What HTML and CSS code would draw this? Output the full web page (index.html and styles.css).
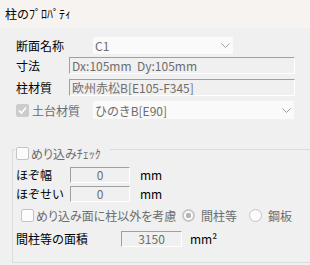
FILE: index.html
```html
<!DOCTYPE html>
<html lang="ja">
<head>
  <meta charset="UTF-8">
  <title>柱のプロパティ</title>
  <link rel="stylesheet" href="styles.css">
</head>
<body>
  <div class="title">柱のﾌﾟﾛﾊﾟﾃｨ</div>

  <div class="panel">
    <div class="row row-name">
      <span class="label">断面名称</span>
      <div class="combo combo-name">
        <span>C1</span>
        <svg class="chevron" width="9" height="5" viewBox="0 0 9 5"><polyline points="0.5,0.5 4.5,4.5 8.5,0.5"/></svg>
      </div>
    </div>
    <div class="row row-size">
      <span class="label">寸法</span>
      <div class="field field-long">Dx:105mm&nbsp;&nbsp;Dy:105mm</div>
    </div>
    <div class="row row-mat">
      <span class="label">柱材質</span>
      <div class="field field-long">欧州赤松B[E105-F345]</div>
    </div>
    <div class="row row-base">
      <span class="label label-check disabled">
        <span class="check checked">
          <svg width="13" height="13" viewBox="0 0 13 13"><polyline points="3,6.5 5.5,9 10,3.5"/></svg>
        </span>
        土台材質
      </span>
      <div class="combo combo-base">
        <span>ひのきB[E90]</span>
        <svg class="chevron" width="9" height="5" viewBox="0 0 9 5"><polyline points="0.5,0.5 4.5,4.5 8.5,0.5"/></svg>
      </div>
    </div>

    <div class="group">
      <div class="legend disabled">
        <span class="check"></span>
        <span class="kana">めり込みﾁｪｯｸ</span>
      </div>
      <div class="row row-tenon">
        <span class="label label-tenon">ほぞ幅</span>
        <div class="field field-num">0</div>
        <span class="unit">mm</span>
      </div>
      <div class="row row-tenon2">
        <span class="label label-tenon">ほぞせい</span>
        <div class="field field-num">0</div>
        <span class="unit">mm</span>
      </div>
      <div class="row row-opts disabled">
        <span class="check check-opt"></span>
        <span class="opt-text kana">めり込み面に柱以外を考慮</span>
        <span class="radio checked"></span>
        <span class="radio-text">間柱等</span>
        <span class="radio"></span>
        <span class="radio-text">鋼板</span>
      </div>
      <div class="row row-area">
        <span class="label label-area">間柱等の面積</span>
        <div class="field field-area">3150</div>
        <span class="unit unit-area">mm²</span>
      </div>
    </div>
  </div>
</body>
</html>
```

FILE: styles.css
```css
html, body {
  margin: 0;
  overflow: hidden;
}
body {
  width: 310px;
  height: 265px;
  background: #f0f0f0;
  font-family: "Noto Sans CJK JP", "Noto Sans", sans-serif;
  font-size: 12px;
  color: #000;
}
.title {
  height: 28px;
  line-height: 28px;
  padding-left: 5px;
  background: #f7f3f0;
}
.panel {
  padding: 9px 0 0 16px;
}
.row {
  display: flex;
  align-items: center;
}
.label {
  width: 53px;
  flex: none;
  white-space: nowrap;
}
.disabled {
  color: #6d6d6d;
}

/* combo boxes */
.combo {
  box-sizing: border-box;
  display: flex;
  align-items: center;
  justify-content: space-between;
  height: 17px;
  margin-left: 24px;
  padding: 0 3px 0 2px;
  background: #fafafa;
  color: #6d6d6d;
}
.combo-name {
  width: 140px;
}
.combo-base {
  width: 201px;
  height: 18px;
}
.chevron polyline {
  fill: none;
  stroke: #a0a0a0;
  stroke-width: 1;
}

/* sunken text fields */
.field {
  box-sizing: border-box;
  height: 17px;
  line-height: 15px;
  padding-left: 2px;
  border: 1px solid;
  border-color: #a0a0a0 #fff #fff #a0a0a0;
  color: #6d6d6d;
  white-space: nowrap;
}
.field-long {
  width: 226px;
}
.row-size { margin-top: 3px; }
.row-mat { margin-top: 5px; }
.row-base { margin-top: 5px; }

.label-check {
  display: flex;
  align-items: center;
  width: 77px;
}
.row-base .combo {
  margin-left: 0;
}

/* checkbox / radio */
.check {
  box-sizing: border-box;
  display: inline-block;
  width: 13px;
  height: 13px;
  flex: none;
  margin-right: 3px;
  border: 1px solid #c4c4c4;
  border-radius: 2px;
  background: #fcfcfc;
}
.check.checked {
  border-color: #cccccc;
  background: #cccccc;
}
.check svg {
  display: block;
  margin: -1px;
}
.check polyline {
  fill: none;
  stroke: #fff;
  stroke-width: 1.6;
}
.radio {
  box-sizing: border-box;
  width: 13px;
  height: 13px;
  flex: none;
  border: 1px solid #c4c4c4;
  border-radius: 50%;
  background: #fcfcfc;
}
.radio.checked {
  border: 2px solid #c8c8c8;
  background: radial-gradient(circle, #b4b4b4 0 2.6px, #fcfcfc 3px);
}
.radio-text {
  margin-left: 6px;
  width: 48px;
}

/* group box */
.group {
  width: 303px;
  margin: 30px 0 0 -4px;
  padding: 0 0 15px 3px;
  border: 1px solid #dcdcdc;
}
.legend {
  box-sizing: border-box;
  display: flex;
  align-items: center;
  width: 95px;
  height: 14px;
  margin: -4px 0 0 -1px;
  padding-left: 1px;
  background: #f0f0f0;
  white-space: nowrap;
  overflow: hidden;
}
.legend .check {
  margin-right: 2px;
}
.kana {
  font-feature-settings: "palt";
}
.field-num {
  width: 60px;
  height: 16px;
  line-height: 14px;
  text-align: center;
  padding: 0;
}
.label-tenon {
  width: 54px;
}
.unit {
  margin-left: 10px;
}
.row-tenon { margin-top: 6px; }
.row-tenon2 { margin-top: 2px; }
.row-opts {
  height: 14px;
  margin-top: 6px;
}
.check-opt {
  margin: 0 2px 0 5px;
}
.opt-text {
  width: 146px;
  white-space: nowrap;
}
.row-area { margin-top: 8px; }
.label-area {
  width: 105px;
}
.field-area {
  width: 61px;
  height: 16px;
  line-height: 14px;
  text-align: center;
  padding: 0;
}
.unit-area {
  margin-left: 8px;
}
```
